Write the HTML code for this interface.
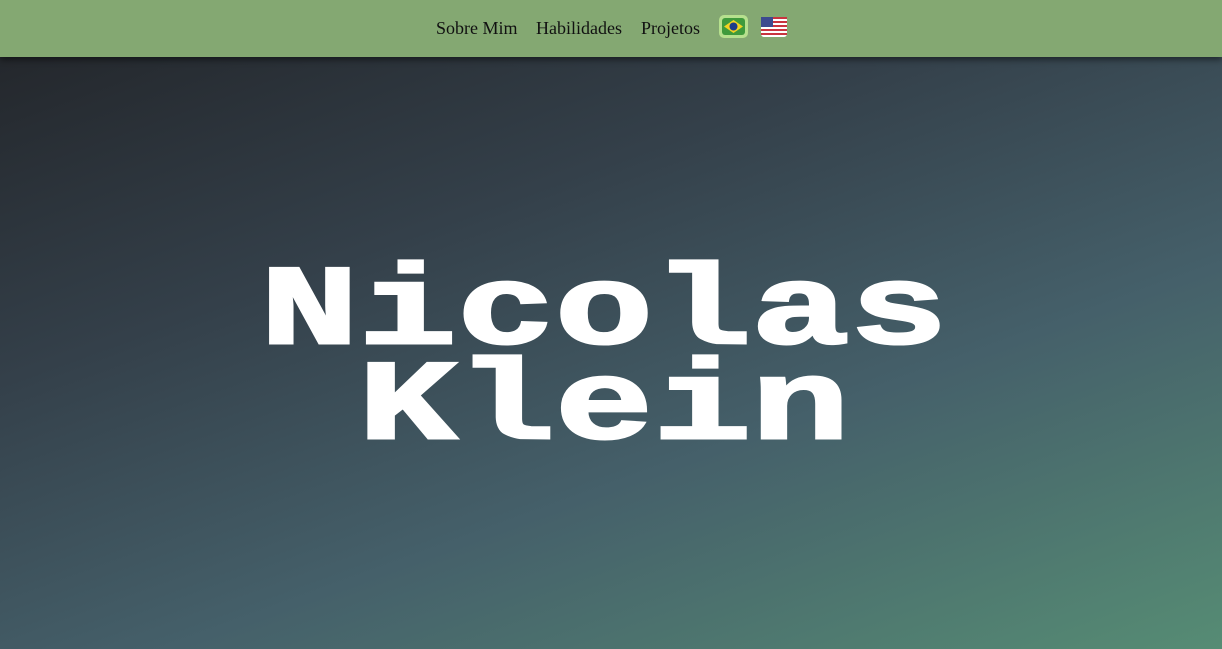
<!DOCTYPE html>
<html><head><meta charset="utf-8"><style>
html,body{margin:0;padding:0;width:1222px;height:649px;overflow:hidden}
body{background:linear-gradient(160deg,#212327 0%,#34404a 35%,#45606a 65%,#568c74 100%);font-family:"Liberation Serif",serif;position:relative}
nav{position:absolute;top:0;left:0;width:1222px;height:57px;background:#84a872;box-shadow:0 3px 6px rgba(0,0,0,.45);z-index:2}
.l{position:absolute;top:18px;font-size:18px;color:#111}
.flag{position:absolute;top:16px;width:26px;height:20px;border-radius:5px}
.t{position:absolute;left:-7px;width:1222px;text-align:center;color:#fff;font-family:"Liberation Mono",monospace;font-weight:bold;font-size:167px;line-height:167px;letter-spacing:0;transform:scale(.98,.68);-webkit-text-stroke:4px #fff}
</style></head><body>
<nav>
<span class="l" style="left:436px">Sobre Mim</span>
<span class="l" style="left:536px">Habilidades</span>
<span class="l" style="left:641px">Projetos</span>
<div class="flag" style="left:719px;background:#b6e08e;width:29px;height:23px;top:15px"><svg width="29" height="23"><rect x="3" y="3" width="23" height="17" rx="3" fill="#3f9a3c"/><polygon points="14.5,5 24,11.5 14.5,18 5,11.5" fill="#f3d321"/><circle cx="14.5" cy="11.5" r="4" fill="#1d3b8a"/></svg></div>
<div class="flag" style="left:761px;top:17px"><svg width="26" height="20"><rect width="26" height="20" rx="3" fill="#fff"/><g fill="#c8343f"><rect y="0" width="26" height="2"/><rect y="4" width="26" height="2"/><rect y="8" width="26" height="2"/><rect y="12" width="26" height="2"/><rect y="16" width="26" height="2"/></g><rect width="12" height="10" fill="#3c4a8f"/></svg></div>
</nav>
<div class="t" style="top:230px">Nicolas</div>
<div class="t" style="top:325px">Klein</div>
</body></html>
